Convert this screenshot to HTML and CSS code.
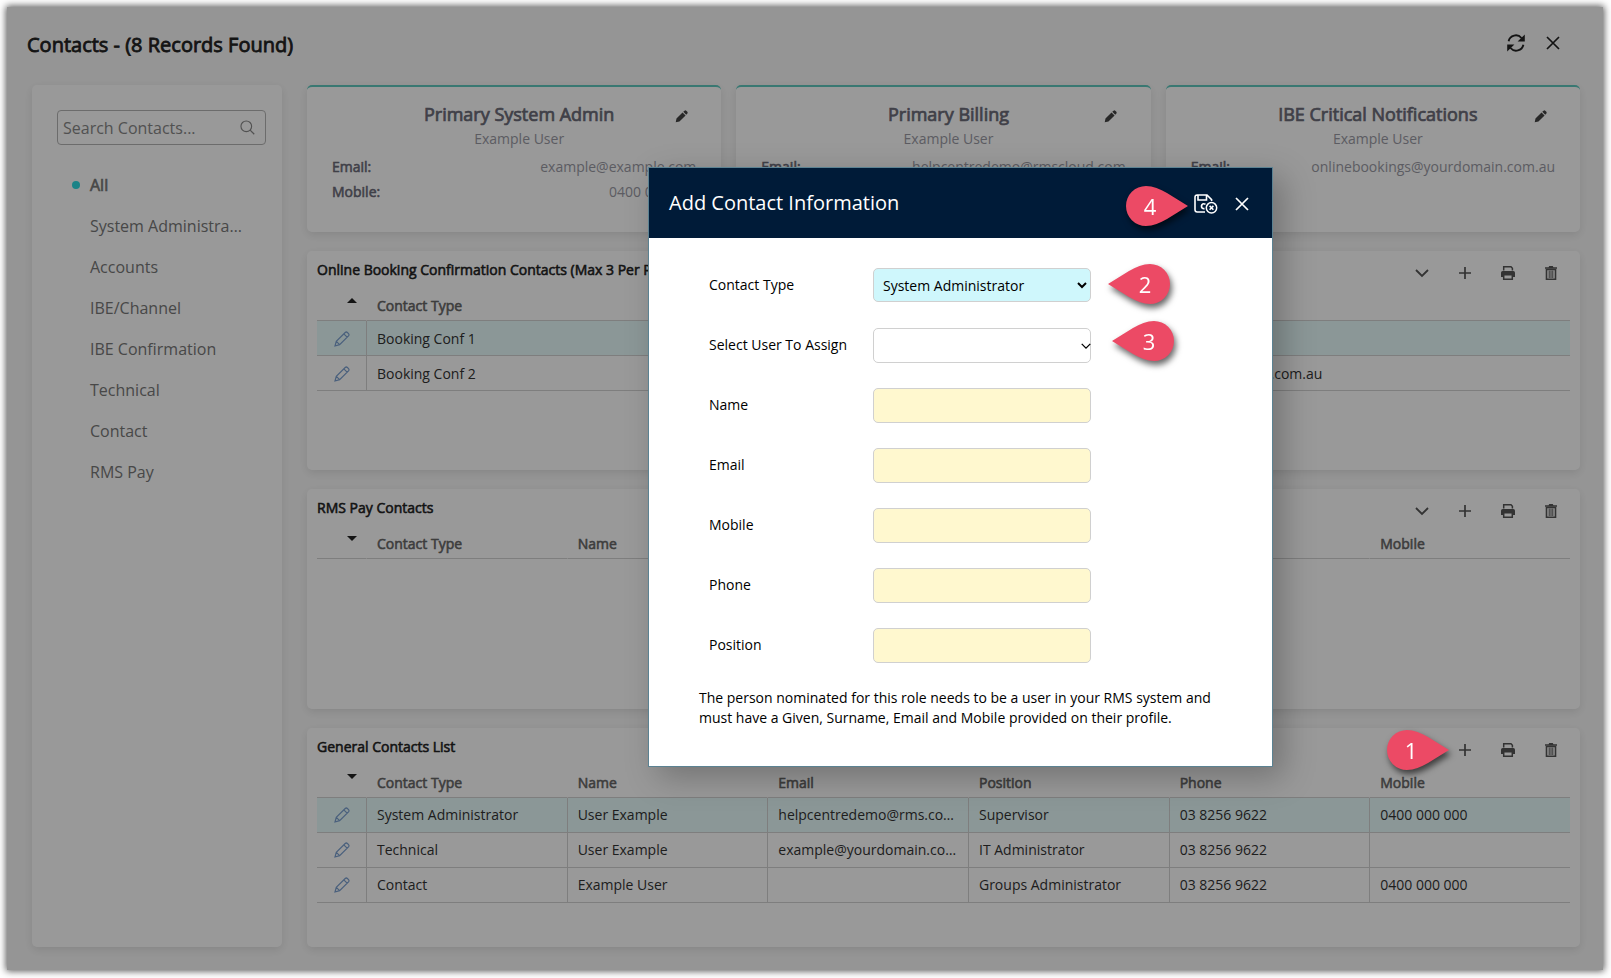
FILE: index.html
```html
<!DOCTYPE html>
<html lang="en">

<head>
    <meta charset="UTF-8">
    <meta name="viewport" content="width=device-width, initial-scale=1.0">
    <title>Contacts</title>
    <link rel="stylesheet" href="styles.css">
</head>

<body>
    <!-- Shared icons -->
    <svg class="icon-defs" aria-hidden="true">
        <symbol id="icon-close" viewBox="0 0 14 14">
            <path d="M1 1L13 13M13 1L1 13" fill="none" stroke="currentColor" stroke-width="1.7" />
        </symbol>
        <symbol id="icon-refresh" viewBox="0 0 18 18">
            <path d="M1.6 7.2A7.4 7.4 0 0 1 14.5 4M16.4 10.8A7.4 7.4 0 0 1 3.5 14" fill="none" stroke="currentColor" stroke-width="1.9" />
            <path d="M17.8 .6V7.6H10.6ZM.2 17.4V10.4H7.4Z" fill="currentColor" />
        </symbol>
        <symbol id="icon-search" viewBox="0 0 16 16">
            <circle cx="6.7" cy="6.7" r="5.7" fill="none" stroke="currentColor" stroke-width="1.2" />
            <path d="M10.8 10.8L15.2 15.2" stroke="currentColor" stroke-width="1.3" />
        </symbol>
        <symbol id="icon-pen" viewBox="0 0 14 14">
            <path d="M.8 13.2L1.6 9.2L8.1 2.7L11.4 6L4.8 12.5ZM8.9 2L10.3 .7Q11.2 0 12.1 .8L13.3 2Q14 2.8 13.4 3.8L12.1 5.2Z" fill="currentColor" />
        </symbol>
        <symbol id="icon-pencil" viewBox="0 0 16 16">
            <path d="M1 15L2.3 10.4L11.2 1.5Q12.3 .5 13.4 1.5L14.5 2.6Q15.5 3.7 14.5 4.8L5.6 13.7ZM2.3 10.4L5.6 13.7M9.8 2.9L13.1 6.2" fill="none" stroke="currentColor" stroke-width="1.2" />
        </symbol>
        <symbol id="icon-chevron" viewBox="0 0 14 14">
            <path d="M1 4L7 10L13 4" fill="none" stroke="currentColor" stroke-width="1.8" />
        </symbol>
        <symbol id="icon-plus" viewBox="0 0 14 14">
            <path d="M7 1V13M1 7H13" fill="none" stroke="currentColor" stroke-width="1.7" />
        </symbol>
        <symbol id="icon-print" viewBox="0 0 14 14">
            <path d="M2.7 4.5V.8H10L11.4 2.2V4.5" fill="none" stroke="currentColor" stroke-width="1.5" />
            <path d="M1.7 5H12.3Q14 5 14 6.7V11H12V8.7H2V11H0V6.7Q0 5 1.7 5Z" fill="currentColor" />
            <path d="M2.7 8.7H11.3V13.2H2.7Z" fill="none" stroke="currentColor" stroke-width="1.5" />
        </symbol>
        <symbol id="icon-trash" viewBox="0 0 14 14">
            <path d="M1 1.2H4.6L5.2 0H8.8L9.4 1.2H13V2.7H1Z" fill="currentColor" />
            <path d="M2.5 3.5H11.5V13.2H2.5Z" fill="none" stroke="currentColor" stroke-width="1.6" />
            <path d="M5.2 4.5V12M7 4.5V12M8.8 4.5V12" stroke="currentColor" />
        </symbol>
        <symbol id="icon-save-close" viewBox="0 0 24 20">
            <path d="M11 18H3.2Q1 18 1 15.8V3.2Q1 1 3.2 1H13L17.6 5.6V7M4 1V6H12.5V1" fill="none" stroke="currentColor" stroke-width="1.6" />
            <path d="M11.5 10.2Q8 8.8 7.5 12Q7.5 15 10.5 14.6" fill="none" stroke="currentColor" stroke-width="1.7" />
            <circle cx="17.5" cy="13.8" r="5.2" fill="none" stroke="currentColor" stroke-width="1.5" />
            <path d="M15.6 11.9L19.4 15.7M19.4 11.9L15.6 15.7" stroke="currentColor" stroke-width="1.6" />
        </symbol>
        <symbol id="icon-pin" viewBox="0 0 62 40">
            <path d="M62 20C48 28 34 40 20 40A20 20 0 0 1 20 0C34 0 48 12 62 20Z" fill="currentColor" />
        </symbol>
    </svg>

    <div class="app">
        <header class="app-header">
            <h1>Contacts - (8 Records Found)</h1>
            <div class="app-actions">
                <button type="button" aria-label="Refresh"><svg class="icon-lg"><use href="#icon-refresh" /></svg></button>
                <button type="button" aria-label="Close"><svg class="icon"><use href="#icon-close" /></svg></button>
            </div>
        </header>

        <div class="layout">
            <aside class="sidebar">
                <div class="search">
                    <input type="text" aria-label="Search Contacts" placeholder="Search Contacts...">
                    <svg class="icon-search"><use href="#icon-search" /></svg>
                </div>
                <nav class="filters">
                    <a href="#" class="active">All</a>
                    <a href="#">System Administrator</a>
                    <a href="#">Accounts</a>
                    <a href="#">IBE/Channel</a>
                    <a href="#">IBE Confirmation</a>
                    <a href="#">Technical</a>
                    <a href="#">Contact</a>
                    <a href="#">RMS Pay</a>
                </nav>
            </aside>

            <main class="content">
                <section class="cards">
                    <article class="card">
                        <div class="card-head">
                            <h2>Primary System Admin</h2>
                            <button type="button" aria-label="Edit"><svg class="icon-pen"><use href="#icon-pen" /></svg></button>
                            <p>Example User</p>
                        </div>
                        <dl>
                            <div><dt>Email:</dt><dd>example@example.com</dd></div>
                            <div><dt>Mobile:</dt><dd>0400 000 000</dd></div>
                        </dl>
                    </article>
                    <article class="card">
                        <div class="card-head">
                            <h2>Primary Billing</h2>
                            <button type="button" aria-label="Edit"><svg class="icon-pen"><use href="#icon-pen" /></svg></button>
                            <p>Example User</p>
                        </div>
                        <dl>
                            <div><dt>Email:</dt><dd>helpcentredemo@rmscloud.com</dd></div>
                        </dl>
                    </article>
                    <article class="card">
                        <div class="card-head">
                            <h2>IBE Critical Notifications</h2>
                            <button type="button" aria-label="Edit"><svg class="icon-pen"><use href="#icon-pen" /></svg></button>
                            <p>Example User</p>
                        </div>
                        <dl>
                            <div><dt>Email:</dt><dd>onlinebookings@yourdomain.com.au</dd></div>
                        </dl>
                    </article>
                </section>

                <section class="panel">
                    <div class="panel-head">
                        <h3>Online Booking Confirmation Contacts (Max 3 Per Property)</h3>
                        <div class="toolbar">
                            <button type="button" aria-label="Collapse"><svg class="icon"><use href="#icon-chevron" /></svg></button>
                            <button type="button" aria-label="Add"><svg class="icon"><use href="#icon-plus" /></svg></button>
                            <button type="button" aria-label="Print"><svg class="icon"><use href="#icon-print" /></svg></button>
                            <button type="button" aria-label="Delete"><svg class="icon"><use href="#icon-trash" /></svg></button>
                        </div>
                    </div>
                    <table>
                        <thead>
                            <tr>
                                <th class="col-edit"><span class="sort-up"></span></th>
                                <th class="col-wide">Contact Type</th>
                                <th>Email</th>
                            </tr>
                        </thead>
                        <tbody>
                            <tr class="selected">
                                <td class="col-edit"><svg class="icon-edit"><use href="#icon-pencil" /></svg></td>
                                <td>Booking Conf 1</td>
                                <td></td>
                            </tr>
                            <tr>
                                <td class="col-edit"><svg class="icon-edit"><use href="#icon-pencil" /></svg></td>
                                <td>Booking Conf 2</td>
                                <td>onlinebookings@yourdomain.com.au</td>
                            </tr>
                        </tbody>
                    </table>
                </section>

                <section class="panel">
                    <div class="panel-head">
                        <h3>RMS Pay Contacts</h3>
                        <div class="toolbar">
                            <button type="button" aria-label="Collapse"><svg class="icon"><use href="#icon-chevron" /></svg></button>
                            <button type="button" aria-label="Add"><svg class="icon"><use href="#icon-plus" /></svg></button>
                            <button type="button" aria-label="Print"><svg class="icon"><use href="#icon-print" /></svg></button>
                            <button type="button" aria-label="Delete"><svg class="icon"><use href="#icon-trash" /></svg></button>
                        </div>
                    </div>
                    <table>
                        <thead>
                            <tr>
                                <th class="col-edit"><span class="sort-down"></span></th>
                                <th>Contact Type</th>
                                <th>Name</th>
                                <th>Email</th>
                                <th>Position</th>
                                <th>Phone</th>
                                <th>Mobile</th>
                            </tr>
                        </thead>
                    </table>
                </section>

                <section class="panel">
                    <div class="panel-head">
                        <h3>General Contacts List</h3>
                        <div class="toolbar">
                            <button type="button" aria-label="Add"><svg class="icon"><use href="#icon-plus" /></svg></button>
                            <button type="button" aria-label="Print"><svg class="icon"><use href="#icon-print" /></svg></button>
                            <button type="button" aria-label="Delete"><svg class="icon"><use href="#icon-trash" /></svg></button>
                        </div>
                    </div>
                    <table>
                        <thead>
                            <tr>
                                <th class="col-edit"><span class="sort-down"></span></th>
                                <th>Contact Type</th>
                                <th>Name</th>
                                <th>Email</th>
                                <th>Position</th>
                                <th>Phone</th>
                                <th>Mobile</th>
                            </tr>
                        </thead>
                        <tbody>
                            <tr class="selected">
                                <td class="col-edit"><svg class="icon-edit"><use href="#icon-pencil" /></svg></td>
                                <td>System Administrator</td>
                                <td>User Example</td>
                                <td>helpcentredemo@rms.com.au</td>
                                <td>Supervisor</td>
                                <td>03 8256 9622</td>
                                <td>0400 000 000</td>
                            </tr>
                            <tr>
                                <td class="col-edit"><svg class="icon-edit"><use href="#icon-pencil" /></svg></td>
                                <td>Technical</td>
                                <td>User Example</td>
                                <td>example@yourdomain.com.au</td>
                                <td>IT Administrator</td>
                                <td>03 8256 9622</td>
                                <td></td>
                            </tr>
                            <tr>
                                <td class="col-edit"><svg class="icon-edit"><use href="#icon-pencil" /></svg></td>
                                <td>Contact</td>
                                <td>Example User</td>
                                <td></td>
                                <td>Groups Administrator</td>
                                <td>03 8256 9622</td>
                                <td>0400 000 000</td>
                            </tr>
                        </tbody>
                    </table>
                </section>
            </main>
        </div>

        <div class="overlay">
            <div class="dialog" role="dialog" aria-labelledby="dialog-title">
                <header class="dialog-head">
                    <h2 id="dialog-title">Add Contact Information</h2>
                    <div class="dialog-actions">
                        <button type="button" aria-label="Save and close"><svg class="icon-save"><use href="#icon-save-close" /></svg></button>
                        <button type="button" aria-label="Close"><svg class="icon"><use href="#icon-close" /></svg></button>
                        <span class="pin pin-save"><svg><use href="#icon-pin" /></svg><b>4</b></span>
                    </div>
                </header>
                <form class="dialog-form">
                    <div class="field">
                        <label for="contact-type">Contact Type</label>
                        <div class="control">
                            <select id="contact-type" class="filled">
                                <option>System Administrator</option>
                            </select>
                            <span class="pin pin-left pin-type"><svg><use href="#icon-pin" /></svg><b>2</b></span>
                        </div>
                    </div>
                    <div class="field">
                        <label for="user">Select User To Assign</label>
                        <div class="control">
                            <select id="user" class="plain">
                                <option></option>
                            </select>
                            <svg class="icon-select"><use href="#icon-chevron" /></svg>
                            <span class="pin pin-left pin-user"><svg><use href="#icon-pin" /></svg><b>3</b></span>
                        </div>
                    </div>
                    <div class="field">
                        <label for="name">Name</label>
                        <div class="control"><input type="text" id="name"></div>
                    </div>
                    <div class="field">
                        <label for="email">Email</label>
                        <div class="control"><input type="text" id="email"></div>
                    </div>
                    <div class="field">
                        <label for="mobile">Mobile</label>
                        <div class="control"><input type="text" id="mobile"></div>
                    </div>
                    <div class="field">
                        <label for="phone">Phone</label>
                        <div class="control"><input type="text" id="phone"></div>
                    </div>
                    <div class="field">
                        <label for="position">Position</label>
                        <div class="control"><input type="text" id="position"></div>
                    </div>
                    <p class="note">The person nominated for this role needs to be a user in your RMS system and must have a Given, Surname, Email and Mobile provided on their profile.</p>
                </form>
            </div>
        </div>

        <span class="pin pin-add"><svg><use href="#icon-pin" /></svg><b>1</b></span>
    </div>
</body>

</html>
```
FILE: styles.css
```css
* {
    box-sizing: border-box;
}

body {
    display: flex;
    min-height: 100vh;
    margin: 0;
    padding: 7px 8px 8px 7px;
    background-color: #fff;
    color: #333;
    font: 14px/20px "Open Sans", sans-serif;
}

h1,
h2,
h3,
p,
dl,
dd {
    margin: 0;
}

h1,
h2,
h3,
th,
dt,
.filters .active {
    font-weight: 400;
    -webkit-text-stroke: 0.04em currentColor;
}

button {
    display: flex;
    align-items: center;
    justify-content: center;
    padding: 0;
    border: 0;
    background: none;
    color: inherit;
    cursor: pointer;
}

.icon-defs {
    position: absolute;
    width: 0;
    height: 0;
}

.icon {
    width: 14px;
    height: 14px;
}

.icon-lg {
    width: 18px;
    height: 18px;
}

.app {
    position: relative;
    display: flex;
    flex: 1;
    flex-direction: column;
    min-width: 0;
    padding: 0 23px 23px 25px;
    background-color: #f9f9f9;
    box-shadow: 0 0 7px 1px #555;
}

.app-header {
    display: flex;
    align-items: center;
    justify-content: space-between;
    height: 78px;
    padding: 0 9px 2px 0;
    margin-left: -5px;
    color: #222;
}

.app-header h1 {
    font-size: 20px;
    line-height: 28px;
}

.app-actions {
    display: flex;
    padding-bottom: 4px;
}

.app-actions button {
    width: 37px;
    height: 36px;
}

.layout {
    display: flex;
    flex: 1;
    gap: 25px;
}

.sidebar,
.card,
.panel {
    border-radius: 5px;
    background-color: #fff;
    box-shadow: 0 3px 10px rgba(0, 0, 0, 0.1);
}

.sidebar {
    flex: 0 0 250px;
    min-width: 0;
    padding: 25px 16px 25px 25px;
}

.search {
    display: flex;
    align-items: center;
    height: 35px;
    margin-bottom: 20px;
    padding: 0 10px 0 5px;
    border: 1px solid #b4b4b4;
    border-radius: 4px;
    color: #888;
}

.search input {
    flex: 1;
    min-width: 0;
    padding: 0;
    border: 0;
    outline: 0;
    background: none;
    font: 16px/24px "Open Sans", sans-serif;
}

.search input::placeholder {
    color: #888;
}

.icon-search {
    width: 15px;
    height: 15px;
}

.filters a {
    position: relative;
    display: block;
    padding: 0 24px 0 33px;
    overflow: hidden;
    color: #787878;
    font-size: 16px;
    line-height: 41px;
    text-decoration: none;
    text-overflow: ellipsis;
    white-space: nowrap;
}

.filters .active::before {
    content: "";
    position: absolute;
    top: 16px;
    left: 15px;
    width: 8px;
    height: 8px;
    border-radius: 50%;
    background-color: #2ddbe1;
}

.content {
    display: flex;
    flex: 1;
    flex-direction: column;
    gap: 19px;
    min-width: 0;
}

.cards {
    display: grid;
    grid-template-columns: repeat(3, 1fr);
    gap: 15px;
    height: 147px;
}

.card {
    padding: 13px 25px;
    border-top: 2px solid #5fc9bf;
}

.card-head {
    display: grid;
    grid-template-columns: 40px 1fr 30px;
    margin-bottom: 4px;
    text-align: center;
}

.card-head h2 {
    grid-column: 2;
    color: #6b6b78;
    font-size: 18px;
    line-height: 28px;
    white-space: nowrap;
}

.card-head p {
    grid-column: 2;
    color: #9a9aa4;
    line-height: 22px;
}

.card-head button {
    padding-top: 4px;
    color: #444;
}

.icon-pen {
    width: 13px;
    height: 13px;
}

.card dl div {
    display: flex;
    justify-content: space-between;
    line-height: 25px;
}

.card dt {
    color: #6b6b78;
}

.card dd {
    color: #9a9aa4;
}

.panel {
    flex: 1;
    padding: 0 10px;
}

.panel-head {
    display: flex;
    align-items: flex-start;
    justify-content: space-between;
    height: 40px;
}

.panel-head h3 {
    padding-top: 9px;
    color: #222;
    font-size: 14px;
}

.toolbar {
    display: flex;
    gap: 4px;
    padding-top: 5px;
    color: #555;
}

.toolbar button {
    width: 39px;
    height: 34px;
}

table {
    width: 100%;
    border-collapse: separate;
    border-spacing: 0;
    table-layout: fixed;
}

th,
td {
    height: 35px;
    padding: 1px 10px 0;
    overflow: hidden;
    border-bottom: 1px solid #d2d2d2;
    border-left: 1px solid transparent;
    text-align: left;
    text-overflow: ellipsis;
    white-space: nowrap;
}

th {
    height: 30px;
    color: #666;
}

td {
    border-left-color: #d2d2d2;
}

.col-edit {
    width: 49px;
    border-left: 0;
}

.col-wide {
    width: 56%;
}

.selected {
    background-color: #e8fcfc;
}

.icon-edit {
    display: block;
    width: 16px;
    height: 16px;
    margin-left: 7px;
    color: #7ba0d0;
}

.sort-up,
.sort-down {
    display: block;
    width: 10px;
    margin: 0 0 12px 20px;
    border: 5px solid transparent;
}

.sort-up {
    border-top: 0;
    border-bottom-color: #222;
}

.sort-down {
    border-bottom: 0;
    border-top-color: #222;
}

.overlay {
    position: absolute;
    inset: 0;
    display: flex;
    align-items: flex-start;
    justify-content: center;
    padding: 160px 0 0 311px;
    background-color: rgba(0, 0, 0, 0.4);
}

.dialog {
    width: 625px;
    border: 1px solid #5b8292;
    background-color: #fff;
    box-shadow: 10px 10px 30px rgba(0, 0, 0, 0.25);
    color: #000;
}

.dialog-head {
    display: flex;
    align-items: center;
    justify-content: space-between;
    height: 70px;
    padding: 0 12px 0 20px;
    background-color: #001b38;
    color: #fff;
}

.dialog-head h2 {
    font-size: 20px;
    line-height: 28px;
    -webkit-text-stroke: 0;
}

.dialog-actions {
    position: relative;
    display: flex;
    margin-top: 2px;
}

.dialog-actions button {
    width: 36px;
    height: 36px;
}

.icon-save {
    width: 24px;
    height: 20px;
}

.dialog-form {
    padding: 17px 50px 38px;
}

.field {
    display: flex;
    align-items: center;
    height: 60px;
    padding-left: 10px;
}

.field label {
    width: 164px;
}

.control {
    position: relative;
    width: 218px;
}

.control input,
.control select {
    display: block;
    width: 100%;
    height: 35px;
    padding: 0 5px;
    border: 1px solid #d0d0d0;
    border-radius: 5px;
    background-color: #fff8cf;
    color: #000;
    font: inherit;
}

.control .filled {
    height: 34px;
    background-color: #cff7fc;
}

.control .plain {
    appearance: none;
    background-color: #fff;
}

.icon-select {
    position: absolute;
    top: 13px;
    right: 0;
    width: 10px;
    height: 10px;
    pointer-events: none;
}

.note {
    margin-top: 13px;
}

/* Numbered step markers */
.pin {
    position: absolute;
    width: 62px;
    height: 40px;
    color: #ec4a65;
    filter: drop-shadow(2px 4px 3px rgba(0, 0, 0, 0.6));
}

.pin svg {
    display: block;
    width: 62px;
    height: 40px;
}

.pin b {
    position: absolute;
    top: 0;
    left: 4px;
    width: 40px;
    color: #fff;
    font: 22px/40px "Open Sans", sans-serif;
    text-align: center;
}

.pin-left svg {
    transform: rotate(180deg);
}

.pin-left b {
    left: 17px;
}

.pin-save {
    top: 0;
    right: 72px;
}

.pin-type {
    top: -4px;
    left: 235px;
}

.pin-user {
    top: -7px;
    left: 239px;
}

.pin-add {
    right: 154px;
    bottom: 200px;
}
```
